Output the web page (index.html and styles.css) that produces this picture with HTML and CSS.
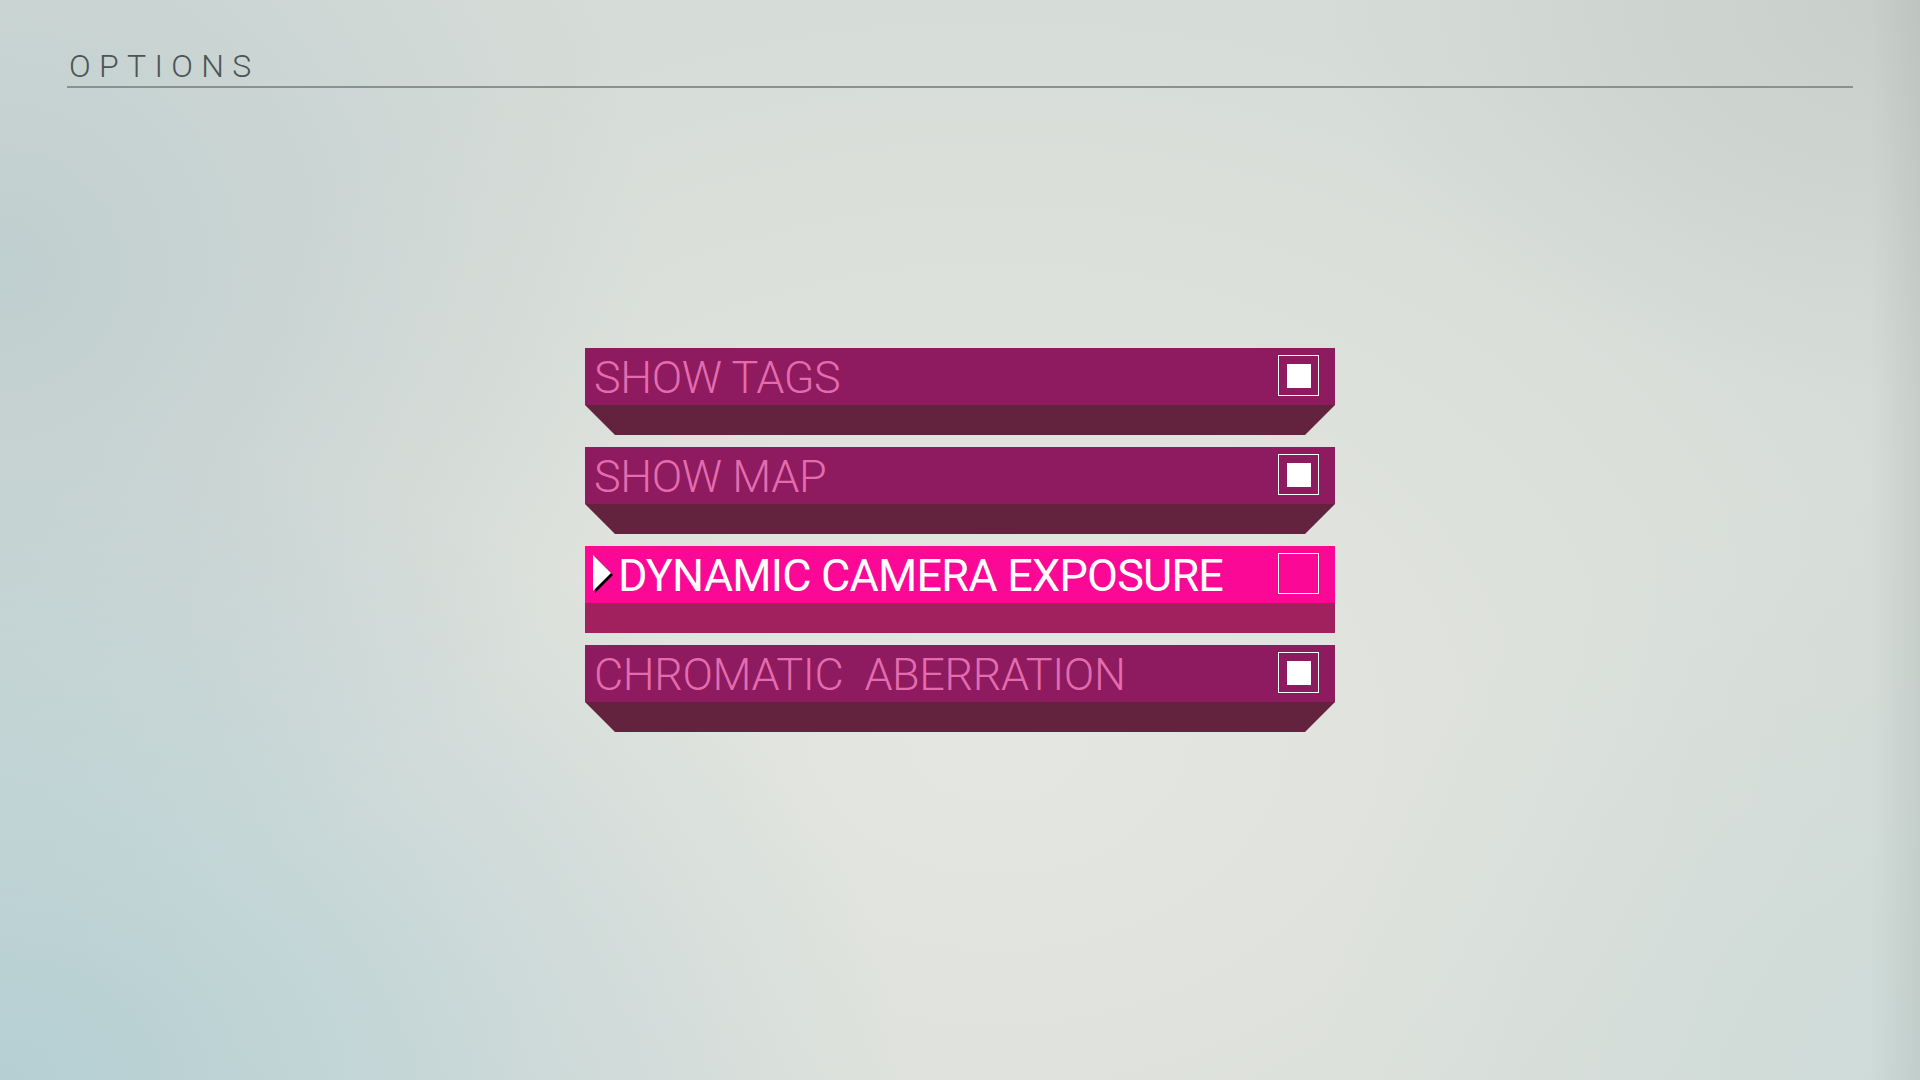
FILE: index.html
```html
<!DOCTYPE html>
<html lang="en">
<head>
<meta charset="utf-8">
<title>Options</title>
<link rel="stylesheet" href="styles.css">
</head>
<body>
<div class="screen">
  <header class="header">
    <h1 class="title">OPTIONS</h1>
  </header>
  <main class="menu">
    <div class="item">
      <div class="bar">
        <span class="label">SHOW TAGS</span>
        <span class="check checked"><span class="tick"></span></span>
      </div>
      <div class="base"></div>
    </div>
    <div class="item">
      <div class="bar">
        <span class="label">SHOW MAP</span>
        <span class="check checked"><span class="tick"></span></span>
      </div>
      <div class="base"></div>
    </div>
    <div class="item active">
      <div class="bar">
        <svg class="cursor" width="22" height="40" viewBox="0 0 22 40">
          <polygon points="3,3 3,39 21,21" fill="#000"/>
          <polygon points="1,1 1,37 19,19" fill="#fff"/>
        </svg>
        <span class="label">DYNAMIC CAMERA EXPOSURE</span>
        <span class="check"></span>
      </div>
      <div class="base"></div>
    </div>
    <div class="item">
      <div class="bar">
        <span class="label">CHROMATIC&nbsp; ABERRATION</span>
        <span class="check checked"><span class="tick"></span></span>
      </div>
      <div class="base"></div>
    </div>
  </main>
</div>
</body>
</html>
```

FILE: styles.css
```css
html, body {
  margin: 0;
  padding: 0;
  width: 1920px;
  height: 1080px;
  overflow: hidden;
}

body {
  font-family: Roboto, "Liberation Sans", sans-serif;
  background:
    linear-gradient(to left, rgba(170, 180, 175, 0.35), rgba(170, 180, 175, 0) 50px),
    radial-gradient(ellipse 900px 650px at 0% 100%, rgba(172, 204, 210, 0.8), rgba(172, 204, 210, 0) 100%),
    radial-gradient(ellipse 650px 650px at 0% 25%, rgba(180, 200, 202, 0.65), rgba(180, 200, 202, 0) 100%),
    radial-gradient(ellipse 600px 400px at 100% 0%, rgba(190, 196, 190, 0.6), rgba(190, 196, 190, 0) 100%),
    radial-gradient(ellipse 600px 600px at 100% 100%, rgba(200, 218, 216, 0.6), rgba(200, 218, 216, 0) 100%),
    radial-gradient(ellipse 1000px 750px at 52% 68%, #e4e6e1 0%, #dfe2dd 45%, #d6dcd8 100%);
  background-color: #d8ddd9;
}

.screen {
  width: 1920px;
  height: 1080px;
  box-sizing: border-box;
  padding: 46px 67px 0 67px;
  display: flex;
  flex-direction: column;
}

.header {
  border-bottom: 2px solid #8a918e;
}

.title {
  margin: 0;
  font-family: Roboto, "Liberation Sans", sans-serif;
  font-weight: 300;
  font-size: 32px;
  line-height: 40px;
  letter-spacing: 8.3px;
  color: #4c5556;
  padding-left: 2px;
}

.menu {
  margin: 260px 0 0 518px;
  width: 750px;
  display: flex;
  flex-direction: column;
  gap: 12px;
}

.item {
  display: flex;
  flex-direction: column;
}

.bar {
  height: 57px;
  background: #8e1a5f;
  display: flex;
  align-items: flex-start;
  padding: 0 16px 0 9px;
}

.label {
  flex: 1;
  font-size: 45px;
  font-weight: 300;
  line-height: 59px;
  height: 57px;
  letter-spacing: -0.4px;
  color: #e46cae;
  white-space: nowrap;
}

.check {
  width: 41px;
  height: 41px;
  box-sizing: border-box;
  border: 1.5px solid #ffffff;
  margin-top: 7px;
  display: flex;
  align-items: center;
  justify-content: center;
}

.tick {
  width: 24px;
  height: 24px;
  background: #ffffff;
}

.base {
  height: 30px;
  background: #63233f;
  clip-path: polygon(0 0, 100% 0, calc(100% - 30px) 100%, 30px 100%);
}

.item.active .bar {
  background: #fb0896;
  padding-left: 7px;
}

.item.active .label {
  color: #ffffff;
  font-weight: 400;
  letter-spacing: -0.8px;
  padding-left: 4px;
}

.item.active .base {
  background: #a1205e;
  clip-path: none;
}

.cursor {
  margin-top: 8px;
  flex: none;
}
```
